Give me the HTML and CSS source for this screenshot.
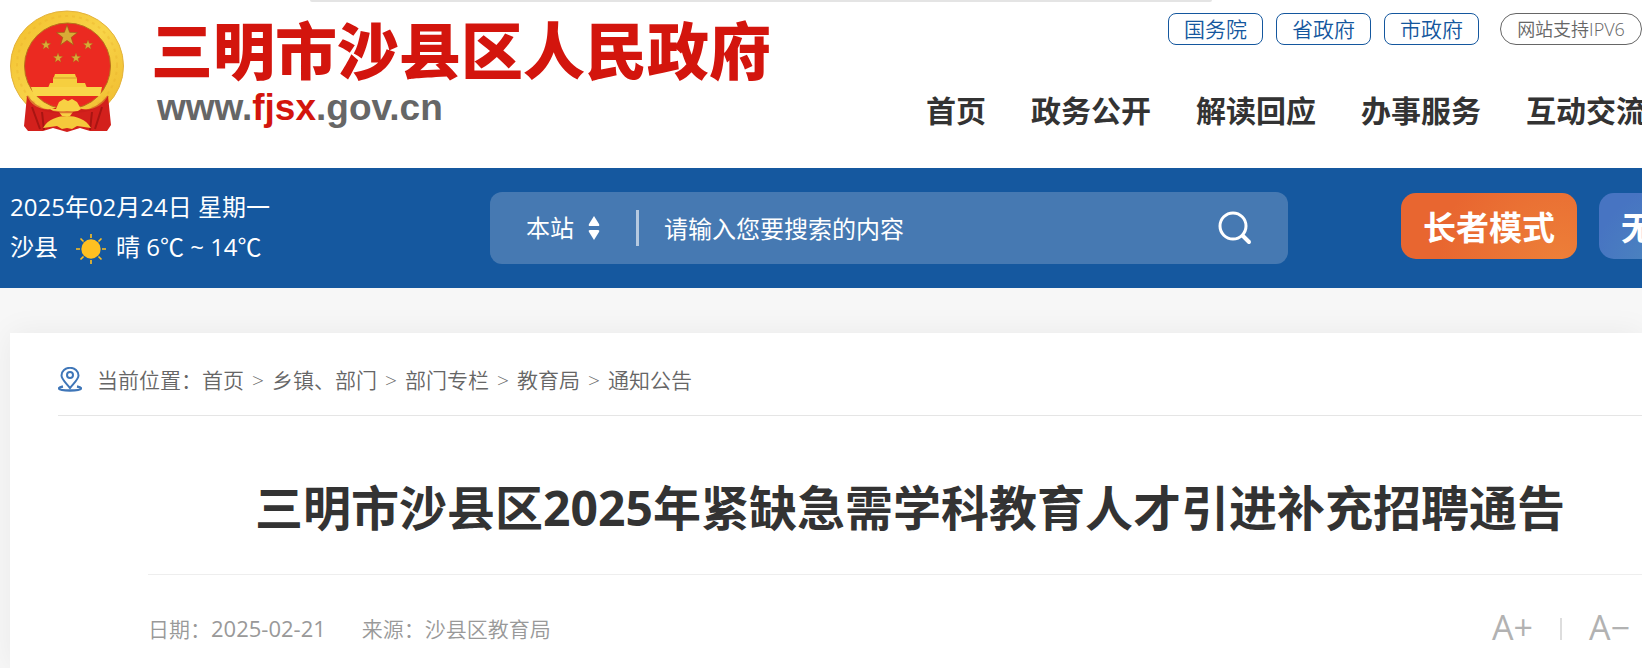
FILE: index.html
```
<!DOCTYPE html>
<html lang="zh-CN">
<head>
    <meta charset="UTF-8">
    <meta name="viewport" content="width=device-width, initial-scale=1.0">
    <title>三明市沙县区人民政府</title>
    <link rel="stylesheet" href="styles.css">
</head>
<body>
    <header class="header">
        <div class="topline"></div>
        <a class="brand" href="#">
            <svg class="emblem" viewBox="0 0 116 124" aria-hidden="true">
                <defs>
                    <linearGradient id="gold" x1="0" y1="0" x2="1" y2="1">
                        <stop offset="0" stop-color="#f2bd2c"/>
                        <stop offset="0.5" stop-color="#f8d448"/>
                        <stop offset="1" stop-color="#efb92c"/>
                    </linearGradient>
                    <polygon id="star" points="0,-10 2.4,-3.3 9.5,-3.1 3.8,1.3 5.9,8.1 0,4 -5.9,8.1 -3.8,1.3 -9.5,-3.1 -2.4,-3.3"/>
                </defs>
                <ellipse cx="57" cy="56" rx="56.500" ry="55" fill="url(#gold)" stroke="#e3b23c"/>
                <ellipse cx="57" cy="55" rx="50" ry="49" fill="none" stroke="#e9b02c" stroke-width="2" stroke-dasharray="3 4" opacity="0.35"/>
                <circle cx="57.500" cy="56" r="43" fill="#eb2a21" stroke="#b8711b"/>
                <g fill="#d9ab36" stroke="#9c5b14" stroke-width="0.600">
                    <use href="#star" transform="translate(57 26) scale(1.1)"/>
                    <use href="#star" transform="translate(36 35) scale(.52)"/>
                    <use href="#star" transform="translate(78 35) scale(.52)"/>
                    <use href="#star" transform="translate(48 48) scale(.52)"/>
                    <use href="#star" transform="translate(66 48) scale(.52)"/>
                </g>
                <path d="M45 64h20l1 3 1 1v5h8l2 5H38l2-5h3v-5l1-1z" fill="#f6cf3f"/>
                <path d="M43 68h24" stroke="#d9992b"/>
                <path d="M21 77h71l-2 9H24z" fill="#f9d64a"/>
                <path d="M28 86h60l-14 8H42z" fill="#e9281f"/>
                <path d="M17 86c4 9 14 15 25 13l15-5 15 5c11 2 21-4 26-13l3 29-4 6H80l-10-3-13 4-14-4-10 3H18l-4-5z" fill="#d3201c"/>
                <path d="M22 97l8 22M32 102l2 18M92 97l-7 22M82 102l-2 18" stroke="#a81512" stroke-width="2" fill="none"/>
                <path d="M46 99l3-7 5-3 4 2 4-2 5 3 4 7-3 2-5 1-3 4h-8l-3-4-6-1-3-2z" fill="#f8d143"/>
                <path d="M33 118c5-9 15-12 24-12s19 3 24 12l-14-2-5 3-5-1-5 1-5-3z" fill="#f5c93b"/>
                <path d="M17 86c10 15 25 17 40 16 17 1 32-3 41-16" stroke="#c31b17" stroke-width="2" fill="none" opacity="0.5"/>
            </svg>
            <span class="brand-text">
                <span class="site-name">三明市沙县区人民政府</span>
                <span class="site-url">www.<b>fjsx</b>.gov.cn</span>
            </span>
        </a>
        <div class="header-right">
            <div class="links">
                <a class="pill" href="#">国务院</a>
                <a class="pill" href="#">省政府</a>
                <a class="pill" href="#">市政府</a>
                <a class="pill pill-gray" href="#">网站支持IPV6</a>
            </div>
            <nav class="nav">
                <a href="#">首页</a>
                <a href="#">政务公开</a>
                <a href="#">解读回应</a>
                <a href="#">办事服务</a>
                <a href="#">互动交流</a>
            </nav>
        </div>
    </header>

    <div class="bar">
        <div class="info">
            <div>2025年02月24日 星期一</div>
            <div class="weather">
                <span>沙县</span>
                <svg class="sun" viewBox="0 0 30 30" aria-hidden="true">
                    <circle cx="15" cy="15" r="9.700" fill="#ffc021"/>
                    <path d="M15 0v4M15 26v4M0 15h4M26 15h4M4.500 4.500l3 3M22.500 22.500l3 3M4.500 25.500l3-3M22.500 7.500l3-3" stroke="#ffc021" stroke-width="1.600"/>
                </svg>
                <span>晴 6℃ ~ 14℃</span>
            </div>
        </div>
        <form class="search">
            <select class="scope" aria-label="搜索范围">
                <option>本站</option>
            </select>
            <svg class="arrows" viewBox="0 0 12 26" aria-hidden="true">
                <path d="M6 1l5 8q1 2-1 2H2q-2 0-1-2zM6 25l5-8q1-2-1-2H2q-2 0-1 2z" fill="#fff"/>
            </svg>
            <span class="divider"></span>
            <input class="keyword" type="text" placeholder="请输入您要搜索的内容" aria-label="搜索内容">
            <button class="search-btn" type="button" aria-label="搜索">
                <svg viewBox="0 0 34 34" fill="none" stroke="#fff" aria-hidden="true">
                    <circle cx="15" cy="15" r="13" stroke-width="3"/>
                    <path d="M25 25l6 6" stroke-width="4" stroke-linecap="round"/>
                </svg>
            </button>
        </form>
        <div class="modes">
            <button class="mode elder" type="button">长者模式</button>
            <button class="mode barrier" type="button">无障碍</button>
        </div>
    </div>

    <main class="card">
        <div class="crumbs">
            <svg class="pin" viewBox="0 0 24 25" fill="none" stroke="#3f76b8" aria-hidden="true">
                <path d="M12 21C7 15 3.500 12 3.500 8.500a8.500 7.700 0 0 1 17 0C20.500 12 17 15 12 21z" stroke-width="2"/>
                <circle cx="12" cy="8" r="3" stroke-width="2"/>
                <path d="M5 19.500c-3 .5-4 1-4 2C1 23 5 23.500 12 23.500s11-.5 11-2c0-1-1-1.500-4-2" stroke-width="2.400"/>
            </svg>
            <span>当前位置：</span>
            <a href="#">首页</a><i>&gt;</i><a href="#">乡镇、部门</a><i>&gt;</i><a href="#">部门专栏</a><i>&gt;</i><a href="#">教育局</a><i>&gt;</i><a href="#">通知公告</a>
        </div>
        <article class="article">
            <h1>三明市沙县区2025年紧缺急需学科教育人才引进补充招聘通告</h1>
            <div class="meta">
                <span class="date">日期：<time>2025-02-21</time></span>
                <span>来源：沙县区教育局</span>
                <div class="zoom">
                    <button type="button">A+</button>
                    <span class="sep"></span>
                    <button type="button">A−</button>
                </div>
            </div>
        </article>
    </main>
</body>
</html>
```
FILE: styles.css
```
*{
    box-sizing: border-box;
}
body{
    display: flex;
    flex-direction: column;
    min-height: 100vh;
    margin: 0;
    background: #f7f7f7;
    color: #333;
    font-family: "Open Sans", "Noto Sans CJK SC", sans-serif;
    overflow: hidden;
}
a{
    color: inherit;
    text-decoration: none;
}
button, input, select{
    font-family: inherit;
    border: 0;
    padding: 0;
    background: none;
    color: inherit;
}
.header{
    position: relative;
    display: flex;
    justify-content: space-between;
    height: 168px;
    padding-left: 10px;
    background: #fff;
}
/* edge of the panel above the page */
.topline{
    position: absolute;
    top: 0;
    left: 310px;
    right: 430px;
    height: 2px;
    background: #e4e4e4;
    border-radius: 0 0 4px 4px;
}
.brand{
    display: flex;
    white-space: nowrap;
}
.emblem{
    width: 116px;
    height: 124px;
    margin-top: 10px;
}
.brand-text{
    display: flex;
    flex-direction: column;
    padding: 16px 0 0 25px;
}
.site-name{
    font-size: 62px;
    line-height: 70px;
    font-weight: 900;
    color: #d3150d;
}
.site-url{
    padding-left: 6px;
    font-family: "Liberation Sans", sans-serif;
    font-size: 37px;
    line-height: 44px;
    font-weight: bold;
    color: #666;
}
.site-url b{
    color: #d3150d;
}
.header-right{
    display: flex;
    flex-direction: column;
    align-items: flex-end;
    white-space: nowrap;
}
.links{
    display: flex;
    gap: 13px;
    padding-top: 13px;
}
.pill{
    width: 95px;
    height: 32px;
    border: 1px solid #14579e;
    border-radius: 8px;
    color: #14579e;
    font-size: 21px;
    line-height: 30px;
    font-weight: 350;
    text-align: center;
}
.pill-gray{
    width: 142px;
    margin-left: 8px;
    border-color: #666;
    border-radius: 16px;
    color: #666;
    font-size: 18px;
}
.nav{
    display: flex;
    gap: 45px;
    margin: 43px -4px 0 0;
    font-size: 30px;
    line-height: 45px;
    font-weight: bold;
}
.bar{
    display: flex;
    align-items: center;
    height: 120px;
    padding-left: 10px;
    background: #15589f;
    color: #fff;
    white-space: nowrap;
}
.info{
    flex: 0 0 480px;
    padding-bottom: 2px;
    font-size: 24px;
    line-height: 40px;
}
.weather{
    display: flex;
    align-items: center;
}
.sun{
    width: 30px;
    height: 30px;
    margin: 3px 10px 0 18px;
}
.search{
    flex: 1;
    display: flex;
    align-items: center;
    height: 72px;
    padding: 0 36px;
    border-radius: 12px;
    background: #4679b2;
    font-size: 24px;
}
.scope{
    appearance: none;
    width: 52px;
    font-size: 24px;
    line-height: 36px;
}
.arrows{
    width: 12px;
    height: 26px;
    margin-left: 10px;
}
.divider{
    width: 3px;
    height: 36px;
    margin: 0 25px 0 36px;
    background: #b5c9e0;
}
.keyword{
    flex: 1;
    min-width: 0;
    height: 48px;
    font-size: 24px;
    outline: none;
}
.keyword::placeholder{
    color: #fff;
    opacity: 1;
}
.search-btn{
    width: 34px;
    height: 34px;
}
.search-btn svg{
    display: block;
}
.modes{
    flex: 0 0 241px;
    min-width: 0;
    display: flex;
    gap: 22px;
    margin: 0 0 4px 113px;
}
.mode{
    flex: none;
    height: 66px;
    padding: 0 22px;
    border-radius: 15px;
    font-size: 33px;
    font-weight: bold;
}
.elder{
    background: radial-gradient(circle at 90% 110%, #ed8039, #e86630 70%);
}
.barrier{
    background: radial-gradient(circle at 60% 130%, #4d8dbd, #4774c2 80%);
}
.card{
    flex: 1;
    margin: 45px 0 0 10px;
    padding-left: 48px;
    background: #fff;
    box-shadow: 0 0 30px rgba(0, 40, 40, 0.06);
}
.crumbs{
    display: flex;
    align-items: center;
    height: 83px;
    padding-top: 12px;
    border-bottom: 1px solid #e5e5e5;
    color: #666;
    font-size: 21px;
    line-height: 30px;
    font-weight: 350;
}
.pin{
    width: 24px;
    height: 25px;
    margin: 0 15px 2px 0;
}
.crumbs i{
    margin: 0 8px;
    font-style: normal;
}
.article{
    margin: 0 -30px 0 90px;
}
h1{
    margin: 0;
    padding: 56px 0 30px;
    border-bottom: 1px solid #eee;
    font-size: 48px;
    line-height: 72px;
    font-weight: bold;
    text-align: center;
    white-space: nowrap;
}
.meta{
    display: flex;
    align-items: center;
    padding: 29px 42px 0 0;
    color: #999;
    font-size: 21px;
    line-height: 48px;
    font-weight: 350;
}
.date{
    margin-right: 36px;
}
.date time{
    font-size: 22px;
    font-weight: 400;
}
.zoom{
    display: flex;
    align-items: center;
    gap: 27px;
    margin-left: auto;
}
.zoom button{
    color: #b2b2b2;
    font-size: 34px;
    line-height: 44px;
    padding-bottom: 4px;
}
.sep{
    width: 2px;
    height: 22px;
    background: #ddd;
}
```
